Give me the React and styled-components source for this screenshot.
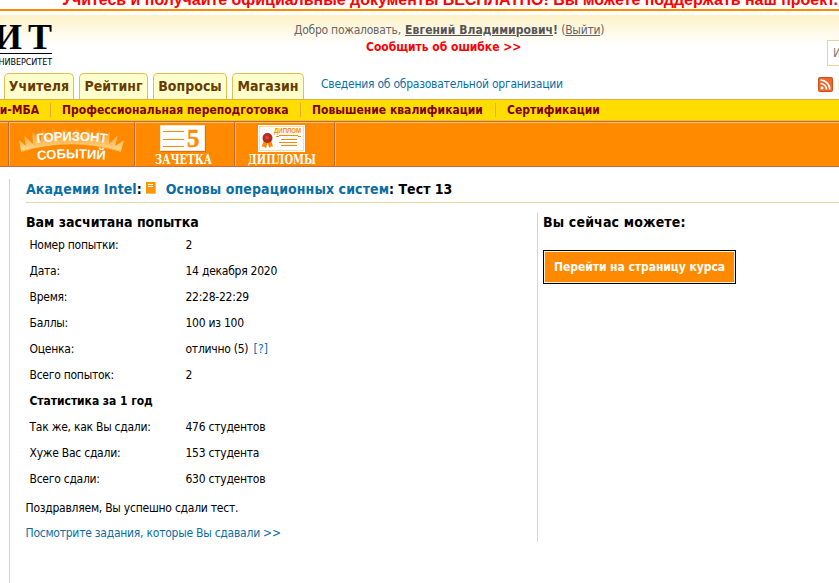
import React from 'react';
import styled, { createGlobalStyle } from 'styled-components';

const Global = createGlobalStyle`
  * { box-sizing: border-box; }
  html, body { margin: 0; background: #fff; overflow: hidden; }
  body {
    font-family: "DejaVu Sans Condensed", "DejaVu Sans", sans-serif;
    font-stretch: condensed;
    font-size: 12px;
    color: #000;
  }
`;

const Page = styled.div`
  width: 839px;
  height: 583px;
  overflow: hidden;
  display: flex;
  flex-direction: column;
`;

const Ticker = styled.div`
  flex: none;
  height: 11px;
  display: flex;
  align-items: flex-end;
  overflow: hidden;
  border-bottom: 2px solid #ff8a00;
  padding-left: 62px;
  font: bold 16px/20px "Liberation Sans", Arial, sans-serif;
  letter-spacing: -0.03px;
  color: #f00;
  white-space: nowrap;
`;
const TickerText = styled.span`
  margin-bottom: -1px;
`;

const Header = styled.header`
  flex: none;
  height: 84px;
  margin-top: 4px;
  display: grid;
  grid-template-columns: 274px 1fr 120px;
  grid-template-rows: 57px 27px;
  background: linear-gradient(#fdf2c6 0, #fff9e6 16px, #fff 30px);
`;

const LogoBlock = styled.div`
  width: 52px;
  height: 57px;
  padding-top: 4px;
  display: flex;
  flex-direction: column;
  align-items: flex-end;
`;
const LogoName = styled.div`
  font: bold 36px/36px "Liberation Serif", serif;
  letter-spacing: 6px;
  margin-right: -6px;
  white-space: nowrap;
  height: 34px;
`;
const LogoCaption = styled.div`
  border-top: 1px solid #000;
  width: 60px;
  display: flex;
  justify-content: flex-end;
  font: 9px/16px "DejaVu Sans Condensed", sans-serif;
  letter-spacing: -0.1px;
  white-space: nowrap;
`;

const Welcome = styled.div`
  padding: 7px 0 0 20px;
  width: 332px;
  color: #666;
  line-height: 16px;
  white-space: nowrap;
  letter-spacing: -0.25px;
`;
const UserName = styled.b`
  letter-spacing: 0.07px;
  margin-left: 1px;
  color: #555;
  u { text-decoration-thickness: 1px; }
`;
const Report = styled.div`
  margin-left: 72px;
  line-height: 18px;
  font-weight: bold;
  color: #f00;
  letter-spacing: -0.03px;
`;

const SearchBox = styled.div`
  justify-self: end;
  align-self: start;
  margin-top: 25px;
  width: 12px;
  height: 26px;
  border: 1px solid #ead39a;
  border-right: 0;
  padding-left: 5px;
  background: #fff;
  color: #777;
  line-height: 24px;
  overflow: hidden;
`;

const Tabs = styled.nav`
  grid-column: 1 / 3;
  display: flex;
  align-items: flex-end;
  padding-left: 4px;
`;
const Tab = styled.a`
  width: ${(p) => p.$w}px;
  margin-right: 5px;
  height: 26px;
  border: 1px solid #e8bd50;
  border-bottom: 0;
  border-radius: 5px 5px 0 0;
  background: #ffffcc;
  color: #663c00;
  font-size: 14px;
  font-weight: bold;
  line-height: 25px;
  text-align: center;
  white-space: nowrap;
`;
const OrgLink = styled.a`
  margin-left: 12px;
  color: #0a6ea5;
  line-height: 29px;
  white-space: nowrap;
  letter-spacing: -0.24px;
`;
const Feed = styled.div`
  justify-self: end;
  display: flex;
  align-items: center;
  gap: 5px;
  height: 25px;
  width: 21px;
  overflow: hidden;
  color: #f5b050;
  font-weight: bold;
  svg { flex: none; }
`;

const SubNav = styled.nav`
  flex: none;
  height: 22px;
  display: flex;
  align-items: center;
  border-top: 1px solid #dfb040;
  border-bottom: 1px solid #e8c040;
  background: #ffdd00;
  color: #800000;
  font-weight: bold;
  white-space: nowrap;
`;
const SubItem = styled.a`
  display: flex;
  justify-content: ${(p) => (p.$end ? 'flex-end' : 'flex-start')};
  flex: none;
  width: ${(p) => p.$w}px;
  padding-left: ${(p) => (p.$end ? 0 : 11)}px;
  padding-right: ${(p) => (p.$end ? 11 : 0)}px;
  line-height: 14px;
  border-right: ${(p) => (p.$last ? 0 : 1)}px solid #e5a93a;
`;

const IconBar = styled.div`
  flex: none;
  height: 46px;
  display: flex;
  border-top: 1px solid #cc6633;
  border-bottom: 1px solid #cc6633;
  background: #ff8a00;
  box-shadow: inset 0 1px #ffc266;
`;
const IconCell = styled.a`
  flex: none;
  width: ${(p) => p.$w}px;
  height: 44px;
  border-right: 1px solid #cc6633;
  box-shadow: 1px 0 #ffc266;
  svg { display: block; }
`;

const Main = styled.main`
  flex: 1;
  margin: 12px 0 0 9px;
  border-left: 1px solid #e3d5a6;
  padding-left: 16px;
`;
const Title = styled.h1`
  margin: 0;
  height: 24px;
  border-bottom: 1px solid #e8d8a0;
  display: flex;
  align-items: flex-start;
  font-size: 14px;
  line-height: 20px;
  white-space: nowrap;
  svg { margin: 3px 10px 0 4px; }
`;
const TitleLink = styled.a`
  color: #0a6ea5;
  letter-spacing: ${(p) => p.$ls}px;
`;
const Columns = styled.div`
  display: flex;
  margin-top: 10px;
`;
const Result = styled.section`
  width: 511px;
`;
const Actions = styled.section`
  flex: 1;
  height: 329px;
  border-left: 1px solid #e3d5a6;
  padding-left: 5px;
`;
const Heading = styled.h2`
  margin: 0;
  font-size: 14px;
  line-height: 19px;
  letter-spacing: ${(p) => p.$ls || 0}px;
  white-space: nowrap;
`;
const Row = styled.div`
  display: grid;
  grid-template-columns: 156px 1fr;
  padding-left: 3.5px;
  height: 26px;
  line-height: 26px;
  letter-spacing: -0.25px;
`;
const RowHeading = styled(Row)`
  font-weight: bold;
  letter-spacing: -0.05px;
`;
const Note = styled.p`
  margin: ${(p) => p.$top}px 0 0 -0.5px;
  line-height: 16px;
  letter-spacing: -0.24px;
`;
const Link = styled.a`
  color: #0a6ea5;
`;
const HelpLink = styled(Link)`
  margin-left: 2px;
  letter-spacing: 0.2px;
`;
const CourseButton = styled.button`
  display: block;
  margin-top: 18px;
  width: 193px;
  height: 34px;
  border: 1px solid #000;
  box-shadow: inset 0 0 0 1px #fff0d8;
  background: #ff8a00;
  color: #fff;
  padding: 0;
  font: bold 12px "DejaVu Sans Condensed", "DejaVu Sans", sans-serif;
  letter-spacing: -0.05px;
`;

const CaptionText = styled.text`
  fill: #fff;
  font: bold 12px "DejaVu Serif Condensed", "DejaVu Serif", serif;
`;
const ArcText = styled.text`
  fill: #fff;
  font: bold 13px "Liberation Sans", Arial, sans-serif;
`;

const HorizonIcon = () => (
  <svg width="126" height="44">
    <defs>
      <linearGradient id="glow" x1="0" y1="0" x2="0" y2="1">
        <stop offset="0" stopColor="#ffb050" stopOpacity="0" />
        <stop offset=".45" stopColor="#ffc46c" stopOpacity=".6" />
        <stop offset="1" stopColor="#ffe3a0" stopOpacity=".95" />
      </linearGradient>
      <filter id="soft"><feGaussianBlur stdDeviation="0.7" /></filter>
    </defs>
    <path
      d="M12 29L10 18L17 24L15 13L24 22L23 9L32 19L33 6L41 17L44 4L51 16L55 3L62 16L68 3L73 16L80 4L83 17L91 6L92 19L101 9L100 22L109 13L106 24L115 18L112 29Q62 14 12 29Z"
      fill="url(#glow)"
      filter="url(#soft)"
    />
    <path d="M12 29.500Q62 14 112 29.500" fill="none" stroke="#ffd98c" strokeOpacity=".7" />
    <path id="arcTop" d="M28 21Q63 16.500 98 21" fill="none" />
    <path id="arcLow" d="M28.500 38Q63 34.500 98 38" fill="none" />
    <ArcText><textPath href="#arcTop" textLength="70">ГОРИЗОНТ</textPath></ArcText>
    <ArcText><textPath href="#arcLow" textLength="68">СОБЫТИЙ</textPath></ArcText>
  </svg>
);

const GradebookIcon = () => (
  <svg width="99" height="44">
    <rect x="26" y="4" width="45" height="26" fill="#d86e20" />
    <rect x="25" y="3" width="45" height="26" fill="#fff" />
    <rect x="25.500" y="3.500" width="44" height="25" fill="none" stroke="#ffd9a8" strokeWidth=".6" />
    <path d="M28 9.500H49M28 17.500H49M28 24.500H49" stroke="#ff8a00" />
    <text x="52" y="24.500" fill="#ff8a00" stroke="#ff8a00" strokeWidth=".4" fontFamily="Liberation Serif, serif" fontWeight="bold" fontSize="25">5</text>
    <CaptionText x="20" y="42" textLength="57" lengthAdjust="spacingAndGlyphs">ЗАЧЕТКА</CaptionText>
  </svg>
);

const DiplomaIcon = () => (
  <svg width="99" height="44">
    <rect x="23" y="3" width="47" height="27" fill="#fff" />
    <rect x="24.500" y="4.500" width="44" height="24" fill="none" stroke="#ffb74d" strokeDasharray="1 1" />
    <text x="39" y="11" fill="#ff8a00" fontFamily="Liberation Sans, sans-serif" fontWeight="bold" fontSize="6.500" textLength="27" lengthAdjust="spacingAndGlyphs">ДИПЛОМ</text>
    <path d="M41 14.500H44M44 13.500H63M63 14.500H66M46 17.500H62M44 20.500H62M46 23.500H62" stroke="#ff8a00" />
    <path d="M29 18L26.500 25L29 24.500L31 26.500L32.500 21L34.500 26L36 24.500H38L36 18Z" fill="#ff8a00" />
    <circle cx="32.500" cy="16" r="5" fill="#b52a1c" />
    <circle cx="32" cy="15.500" r="2" fill="#d04838" />
    <CaptionText x="13" y="42" textLength="68" lengthAdjust="spacingAndGlyphs">ДИПЛОМЫ</CaptionText>
  </svg>
);

const BookIcon = () => (
  <svg width="10" height="12">
    <rect width="10" height="12" rx="1" fill="#ffbd4d" />
    <rect width="9" height="11" fill="#ff9500" />
    <path d="M2 2.500H7M2 4.500H7" stroke="#fff" />
  </svg>
);

const RssIcon = () => (
  <svg width="15" height="15" viewBox="0 0 15 15">
    <rect width="15" height="15" rx="2" fill="#d9481a" />
    <rect x="1" y="1" width="13" height="13" rx="1" fill="#e96a2a" />
    <circle cx="4" cy="11" r="1.500" fill="#fff" />
    <path d="M2.500 6.500A6 6 0 0 1 8.500 12.500M2.500 3.200A9.300 9.300 0 0 1 11.800 12.500" fill="none" stroke="#fff" strokeWidth="1.700" />
  </svg>
);

const attempt = [
  ['Номер попытки:', '2'],
  ['Дата:', '14 декабря 2020'],
  ['Время:', '22:28-22:29'],
  ['Баллы:', '100 из 100'],
  ['Оценка:', <>отлично (5) <HelpLink>[?]</HelpLink></>],
  ['Всего попыток:', '2'],
];
const stats = [
  ['Так же, как Вы сдали:', '476 студентов'],
  ['Хуже Вас сдали:', '153 студента'],
  ['Всего сдали:', '630 студентов'],
];
const renderRow = ([label, value]) => (
  <Row key={label}>
    <span>{label}</span>
    <span>{value}</span>
  </Row>
);

export default function App() {
  return (
    <Page>
      <Global />
      <Ticker>
        <TickerText>Учитесь и получайте официальные документы БЕСПЛАТНО! Вы можете поддержать наш проект.</TickerText>
      </Ticker>
      <Header>
        <LogoBlock>
          <LogoName>ИТ</LogoName>
          <LogoCaption>УНИВЕРСИТЕТ</LogoCaption>
        </LogoBlock>
        <Welcome>
          Добро пожаловать, <UserName><u>Евгений Владимирович</u>!</UserName> (<u>Выйти</u>)
          <Report>Сообщить об ошибке &gt;&gt;</Report>
        </Welcome>
        <SearchBox>И</SearchBox>
        <Tabs>
          <Tab $w={70}>Учителя</Tab>
          <Tab $w={69}>Рейтинг</Tab>
          <Tab $w={74}>Вопросы</Tab>
          <Tab $w={72}>Магазин</Tab>
          <OrgLink>Сведения об образовательной организации</OrgLink>
        </Tabs>
        <Feed><RssIcon />Н</Feed>
      </Header>
      <SubNav>
        <SubItem $w={51} $end>и-МБА</SubItem>
        <SubItem $w={250}>Профессиональная переподготовка</SubItem>
        <SubItem $w={195}>Повышение квалификации</SubItem>
        <SubItem $w={120} $last>Сертификации</SubItem>
      </SubNav>
      <IconBar>
        <IconCell $w={9} />
        <IconCell $w={126}><HorizonIcon /></IconCell>
        <IconCell $w={100}><GradebookIcon /></IconCell>
        <IconCell $w={100}><DiplomaIcon /></IconCell>
      </IconBar>
      <Main>
        <Title>
          <TitleLink $ls={0.08}>Академия Intel</TitleLink>:
          <BookIcon />
          <TitleLink $ls={0.1}>Основы операционных систем</TitleLink>: Тест 13
        </Title>
        <Columns>
          <Result>
            <Heading>Вам засчитана попытка</Heading>
            {attempt.map(renderRow)}
            <RowHeading>Статистика за 1 год</RowHeading>
            {stats.map(renderRow)}
            <Note $top={8}>Поздравляем, Вы успешно сдали тест.</Note>
            <Note $top={9}><Link>Посмотрите задания, которые Вы сдавали &gt;&gt;</Link></Note>
          </Result>
          <Actions>
            <Heading $ls={0.15}>Вы сейчас можете:</Heading>
            <CourseButton>Перейти на страницу курса</CourseButton>
          </Actions>
        </Columns>
      </Main>
    </Page>
  );
}
